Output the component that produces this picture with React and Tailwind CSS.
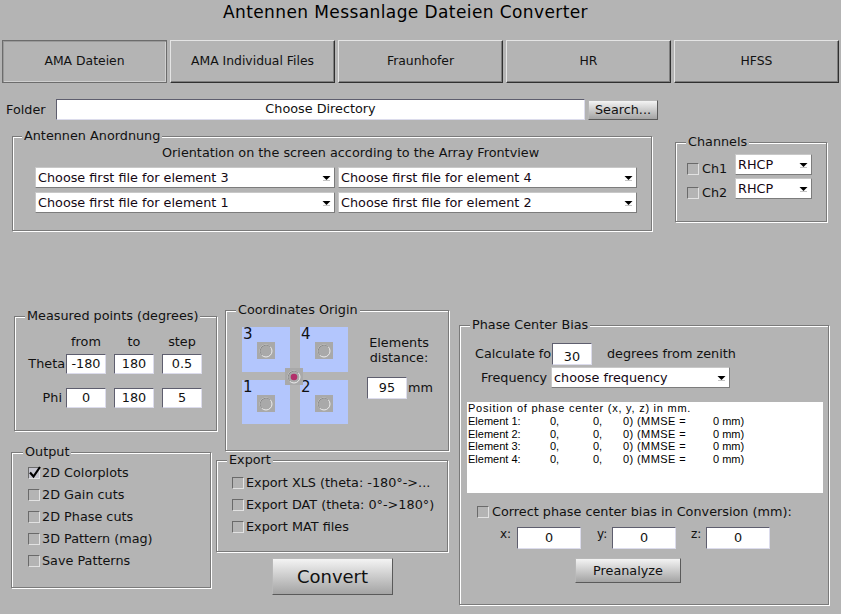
import React from "react";

const BG = "bg-[#b4b4b4]";

function Group({ title, className = "", legendMl = "ml-[10px]", children }) {
  return (
    <div
      className={`shrink-0 border border-[#7a7a7a] shadow-[inset_1px_1px_0_#ffffff,1px_1px_0_#ffffff] ${className}`}
    >
      <div className={`-mt-[9px] ${legendMl} w-fit ${BG} px-[2px] leading-[16px] text-[#111]`}>
        {title}
      </div>
      {children}
    </div>
  );
}

function Check({ checked = false }) {
  return (
    <div
      className={`relative w-[12px] h-[12px] shrink-0 border border-t-[#6a6a6a] border-l-[#6a6a6a] border-b-[#e2e2e2] border-r-[#e2e2e2] ${
        checked ? "bg-[#c6c6d0]" : BG
      }`}
    >
      {checked && (
        <svg
          className="absolute -left-[1px] -top-[3px]"
          width="14"
          height="14"
          viewBox="0 0 14 14"
        >
          <path d="M2 7.5 L5.5 11.5 L12 2" fill="none" stroke="#000" strokeWidth="2.2" />
        </svg>
      )}
    </div>
  );
}

function Field({ value, className = "", textClass = "" }) {
  return (
    <div
      className={`shrink-0 bg-white border border-t-[#5e5e6e] border-l-[#5e5e6e] border-b-[#dcdcec] border-r-[#dcdcec] flex items-center justify-center leading-none text-[#111] ${className}`}
    >
      <span className={textClass}>{value}</span>
    </div>
  );
}

function Arrow() {
  return (
    <svg width="9" height="6" viewBox="0 0 9 6" className="shrink-0">
      <path d="M0.5 1 H8.5 L4.5 5 Z" fill="#000" />
      <path d="M1 5.5 H8" stroke="#9a9a9a" strokeWidth="0.6" />
    </svg>
  );
}

function Select({ text, className = "" }) {
  return (
    <div
      className={`shrink-0 flex items-center justify-between bg-white border border-t-[#c8c8c8] border-l-[#c8c8c8] border-b-[#7c7c7c] border-r-[#7c7c7c] pl-[2px] pr-[3px] ${className}`}
    >
      <span className="leading-[16px] text-[#140814] whitespace-nowrap">{text}</span>
      <Arrow />
    </div>
  );
}

function Btn({ children, className = "" }) {
  return (
    <div
      className={`shrink-0 flex items-center justify-center bg-linear-to-b from-[#f4f4f4] to-[#a4a4a4] border border-t-[#b8b8b8] border-l-[#b8b8b8] border-b-[#5a5a5a] border-r-[#5a5a5a] text-[#111] ${className}`}
    >
      {children}
    </div>
  );
}

function Radio({ dot = false }) {
  return (
    <svg width="14" height="14" viewBox="0 0 14 14">
      <circle cx="7" cy="7" r="6" fill="none" stroke="#ececec" strokeWidth="1" />
      <path d="M2.76 11.24 A6 6 0 0 1 11.24 2.76" fill="none" stroke="#8a8a8a" strokeWidth="1" />
      {dot && <circle cx="7" cy="7" r="3.3" fill="#b2306a" />}
    </svg>
  );
}

function Square({ n }) {
  return (
    <div className="bg-[#b3c6fd]">
      <div className="pl-[1px] text-[15px] leading-[14px] text-[#111]">{n}</div>
      <div className="ml-[15px] mt-[1px] w-[18px] h-[17px] bg-[#a9a9a9] flex items-center justify-center">
        <Radio />
      </div>
    </div>
  );
}

function CheckRow({ label, checked, className = "" }) {
  return (
    <div className={`flex items-center gap-[2px] h-[22px] ${className}`}>
      <Check checked={checked} />
      <span className="leading-[16px] whitespace-nowrap">{label}</span>
    </div>
  );
}

function ElemLine({ n }) {
  return (
    <div className="flex whitespace-pre">
      <span className="w-[82px]">Element {n}:</span>
      <span className="w-[43px]">0,</span>
      <span className="w-[30px]">0,</span>
      <span className="w-[90px] tracking-[0.4px]">0) (MMSE =</span>
      <span>0 mm)</span>
    </div>
  );
}

export default function App() {
  const tabs = ["AMA Dateien", "AMA Individual Files", "Fraunhofer", "HR", "HFSS"];
  return (
    <div
      className={`w-[841px] h-[614px] overflow-hidden ${BG} text-[12.8px] text-[#111] font-['DejaVu_Sans',sans-serif]`}
    >
      {/* Title */}
      <div className="h-[24px] pr-[30px] text-center text-[17px] tracking-[0.4px] leading-[24px] text-black">
        Antennen Messanlage Dateien Converter
      </div>

      {/* Tabs */}
      <div className="mt-[16px] flex gap-[3px] px-[2px] h-[43px] text-[12.4px]">
        {tabs.map((t, i) => (
          <div
            key={t}
            className={`flex-1 flex items-center justify-center border ${
              i === 0
                ? "border-[#6c6c6c] shadow-[inset_1px_1px_0_#9a9a9a,inset_-1px_-1px_0_#d0d0d0]"
                : "border-t-[#e4e4e4] border-l-[#e4e4e4] border-b-[#303030] border-r-[#303030] shadow-[inset_-1px_-1px_0_#7e7e7e]"
            }`}
          >
            {t}
          </div>
        ))}
      </div>

      {/* Folder row */}
      <div className="mt-[16px] flex items-center h-[21px]">
        <span className="ml-[6px] w-[50px] leading-[16px]">Folder</span>
        <Field className="w-[529px] h-[21px]" value="Choose Directory" />
        <Btn className="ml-[3px] w-[70px] h-[20px]">Search...</Btn>
      </div>

      {/* Top panels */}
      <div className="mt-[16px] flex items-start">
        <Group title="Antennen Anordnung" legendMl="ml-[9px]" className="ml-[12px] w-[640px] h-[95px]">
          <div className="mt-[1px] pl-[149px] leading-[16px] whitespace-nowrap">
            Orientation on the screen according to the Array Frontview
          </div>
          <div className="mt-[6px] pl-[22px] grid grid-cols-[300px_299px] gap-x-[3px] gap-y-[4px]">
            <Select className="h-[21px]" text="Choose first file for element 3" />
            <Select className="h-[21px]" text="Choose first file for element 4" />
            <Select className="h-[21px]" text="Choose first file for element 1" />
            <Select className="h-[21px]" text="Choose first file for element 2" />
          </div>
        </Group>

        <Group title="Channels" className="ml-[23px] mt-[6px] w-[152px] h-[80px]">
          <div className="mt-[4px] flex flex-col gap-[3px]">
            {["Ch1", "Ch2"].map((c) => (
              <div key={c} className="flex items-start h-[21px]">
                <div className="ml-[11px] mt-[7px] h-[16px] w-[48px] flex items-center gap-[3px]">
                  <Check />
                  <span className="leading-[16px]">{c}</span>
                </div>
                <Select className="w-[77px] h-[21px]" text="RHCP" />
              </div>
            ))}
          </div>
        </Group>
      </div>

      {/* Bottom area */}
      <div className="flex items-start">
        {/* Left column */}
        <div className="w-[216px] shrink-0 flex flex-col">
          <Group title="Measured points (degrees)" className="ml-[14px] mt-[85px] w-[203px] h-[115px]">
            <div className="mt-[10px] flex leading-[16px]">
              <div className="w-[51px]" />
              <div className="w-[40px] text-center">from</div>
              <div className="ml-[8px] w-[40px] text-center">to</div>
              <div className="ml-[8px] w-[40px] text-center">step</div>
            </div>
            <div className="mt-[4px] flex items-center h-[20px]">
              <div className="w-[51px] pr-[1px] text-right leading-[16px]">Theta</div>
              <Field className="w-[40px] h-[20px]" value="-180" />
              <Field className="ml-[8px] w-[40px] h-[20px]" value="180" />
              <Field className="ml-[8px] w-[40px] h-[20px]" value="0.5" />
            </div>
            <div className="mt-[14px] flex items-center h-[20px]">
              <div className="w-[51px] pr-[4px] text-right leading-[16px]">Phi</div>
              <Field className="w-[40px] h-[20px]" value="0" />
              <Field className="ml-[8px] w-[40px] h-[20px]" value="180" />
              <Field className="ml-[8px] w-[40px] h-[20px]" value="5" />
            </div>
          </Group>

          <Group title="Output" legendMl="ml-[11px]" className="ml-[11px] mt-[21px] w-[200px] h-[136px]">
            <div className="mt-[2px] pl-[16px] flex flex-col">
              <CheckRow label="2D Colorplots" checked />
              <CheckRow label="2D Gain cuts" />
              <CheckRow label="2D Phase cuts" />
              <CheckRow label="3D Pattern (mag)" />
              <CheckRow label="Save Patterns" />
            </div>
          </Group>
        </div>

        {/* Middle column */}
        <div className="w-[233px] shrink-0 flex flex-col">
          <Group title="Coordinates Origin" className="ml-[9px] mt-[79px] w-[224px] h-[141px]">
            <div className="flex">
              <div className="relative ml-[16px] mt-[9px] grid grid-cols-[48px_48px] grid-rows-[45px_44px] gap-x-[10px] gap-y-[8px]">
                <Square n="3" />
                <Square n="4" />
                <Square n="1" />
                <Square n="2" />
                <div className="absolute left-[43px] top-[41px] w-[18px] h-[17px] bg-[#a9a9a9] flex items-center justify-center">
                  <Radio dot />
                </div>
              </div>
              <div className="ml-[2px] w-[98px]">
                <div className="mt-[17px] text-center leading-[15px]">
                  Elements
                  <br />
                  distance:
                </div>
                <div className="mt-[12px] flex items-center">
                  <Field className="ml-[17px] w-[40px] h-[22px]" value="95" />
                  <span className="ml-[1px] leading-[16px]">mm</span>
                </div>
              </div>
            </div>
          </Group>

          <Group title="Export" className="mt-[9px] w-[232px] h-[92px]">
            <div className="mt-[4px] pl-[15px] flex flex-col">
              <CheckRow label="Export XLS (theta: -180°->..." />
              <CheckRow label="Export DAT (theta: 0°->180°)" />
              <CheckRow label="Export MAT files" />
            </div>
          </Group>

          <Btn className="ml-[56px] mt-[6px] w-[121px] h-[37px] text-[18px]">Convert</Btn>
        </div>

        {/* Right column */}
        <div className="flex flex-col">
          <Group title="Phase Center Bias" className="ml-[10px] mt-[94px] w-[370px] h-[280px]">
            <div className="mt-[10px] pl-[15px] flex items-center h-[22px]">
              <span className="w-[77px] leading-[16px] whitespace-nowrap">Calculate fo</span>
              <Field className="w-[40px] h-[22px]" value="30" textClass="mt-[6px]" />
              <span className="ml-[15px] leading-[16px]">degrees from zenith</span>
            </div>
            <div className="mt-[2px] pl-[21px] flex items-center h-[21px]">
              <span className="w-[70px] leading-[16px]">Frequency</span>
              <Select className="w-[179px] h-[21px]" text="choose frequency" />
            </div>
            <div className="mt-[14px] ml-[7px] w-[356px] h-[91px] bg-white pl-[1px] text-[11px] leading-[12.75px] text-black font-['Liberation_Sans',Arial,sans-serif]">
              <div className="tracking-[0.75px]">Position of phase center (x, y, z) in mm.</div>
              <ElemLine n={1} />
              <ElemLine n={2} />
              <ElemLine n={3} />
              <ElemLine n={4} />
            </div>
            <div className="mt-[8px] pl-[17px] flex items-center gap-[3px] h-[22px]">
              <Check />
              <span className="leading-[16px] whitespace-nowrap">Correct phase center bias in Conversion (mm):</span>
            </div>
            <div className="mt-[4px] pl-[40px] flex items-start">
              <span className="w-[17px] text-[12px] leading-[14px]">x:</span>
              <Field className="w-[64px] h-[22px]" value="0" />
              <span className="ml-[16px] w-[15px] text-[12px] leading-[14px]">y:</span>
              <Field className="w-[64px] h-[22px]" value="0" />
              <span className="ml-[15px] w-[15px] text-[12px] leading-[14px]">z:</span>
              <Field className="w-[64px] h-[22px]" value="0" />
            </div>
            <Btn className="mt-[9px] ml-[115px] w-[106px] h-[25px]">Preanalyze</Btn>
          </Group>
        </div>
      </div>
    </div>
  );
}
